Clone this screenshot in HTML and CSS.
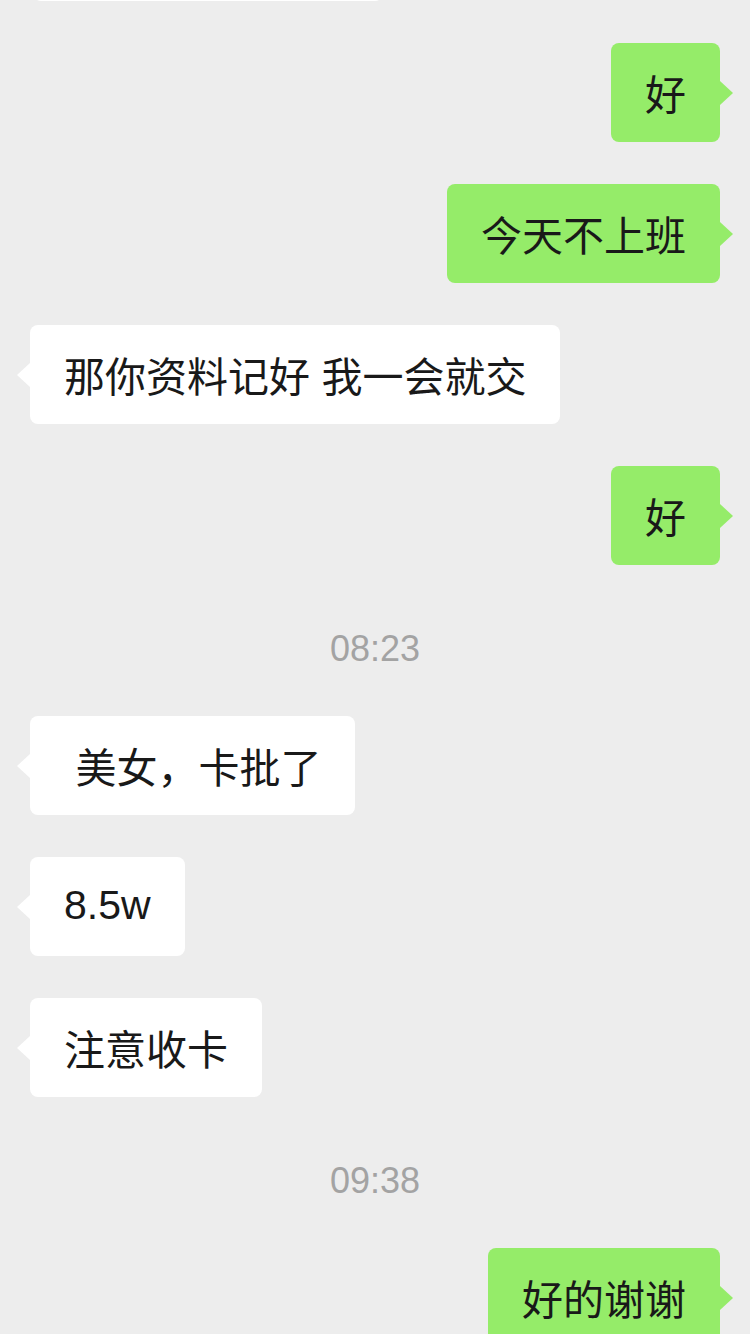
FILE: index.html
```html
<!DOCTYPE html>
<html lang="zh-CN">
<head>
  <meta charset="UTF-8">
  <title>聊天</title>
  <link rel="stylesheet" href="styles.css">
</head>
<body>

  <div class="chat">
    <div class="row left"><div class="bubble cut"></div></div>
    <div class="row right"><div class="bubble">好</div></div>
    <div class="row right"><div class="bubble">今天不上班</div></div>
    <div class="row left"><div class="bubble">那你资料记好 我一会就交</div></div>
    <div class="row right"><div class="bubble">好</div></div>

    <div class="time">08:23</div>

    <div class="row left"><div class="bubble">&nbsp;美女，卡批了</div></div>
    <div class="row left"><div class="bubble">8.5w</div></div>
    <div class="row left"><div class="bubble">注意收卡</div></div>

    <div class="time">09:38</div>

    <div class="row right"><div class="bubble">好的谢谢</div></div>
  </div>

</body>
</html>
```

FILE: styles.css
```css
body {
  margin: 0;
  height: 1334px;
  overflow: hidden;
  background-color: #ededed;
  color: #191919;
  font-family: "Liberation Sans", "Noto Sans CJK SC", sans-serif;
}

.chat {
  display: flex;
  flex-direction: column;
  gap: 42px;
  padding: 0 30px;
  margin-top: -98px;
}

.row {
  display: flex;
}

.row.right {
  justify-content: flex-end;
}

.bubble {
  position: relative;
  box-sizing: border-box;
  height: 99px;
  padding: 0 34px 2px;
  display: flex;
  align-items: center;
  font-size: 41px;
  white-space: pre;
  border-radius: 8px;
}

/* bubble cut off by the top edge */
.bubble.cut {
  width: 350px;
  margin-left: 3px;
}

.left .bubble {
  background-color: #ffffff;
}

.right .bubble {
  background-color: #95ec69;
}

.bubble::after {
  content: "";
  position: absolute;
  top: 50%;
  margin-top: -12px;
  border-top: 12px solid transparent;
  border-bottom: 12px solid transparent;
}

.left .bubble::after {
  left: -13px;
  border-right: 13px solid #ffffff;
}

.right .bubble::after {
  right: -13px;
  border-left: 13px solid #95ec69;
}

.time {
  padding: 22px 0 5px;
  line-height: 40px;
  text-align: center;
  font-size: 36px;
  color: #a3a3a3;
}
```
